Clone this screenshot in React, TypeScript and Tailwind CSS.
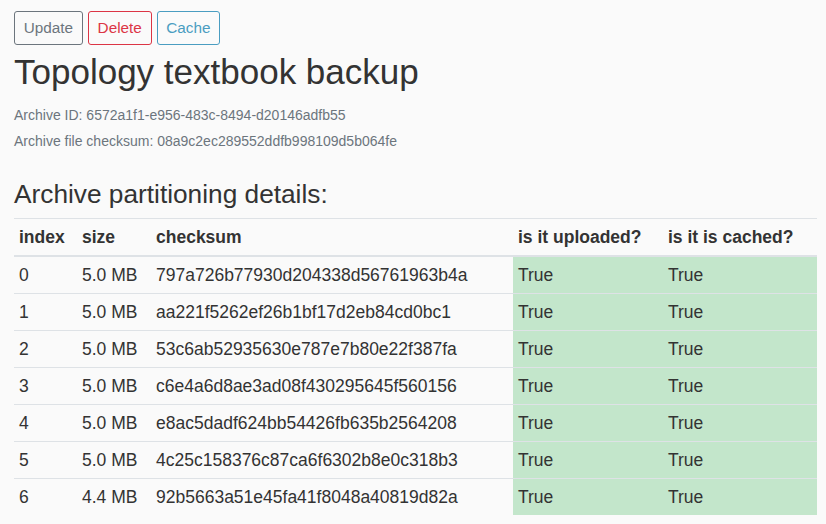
const parts = [
  { index: 0, size: '5.0 MB', checksum: '797a726b77930d204338d56761963b4a' },
  { index: 1, size: '5.0 MB', checksum: 'aa221f5262ef26b1bf17d2eb84cd0bc1' },
  { index: 2, size: '5.0 MB', checksum: '53c6ab52935630e787e7b80e22f387fa' },
  { index: 3, size: '5.0 MB', checksum: 'c6e4a6d8ae3ad08f430295645f560156' },
  { index: 4, size: '5.0 MB', checksum: 'e8ac5dadf624bb54426fb635b2564208' },
  { index: 5, size: '5.0 MB', checksum: '4c25c158376c87ca6f6302b8e0c318b3' },
  { index: 6, size: '4.4 MB', checksum: '92b5663a51e45fa41f8048a40819d82a' },
];

const btn =
  'rounded-[3px] border bg-transparent px-[8.75px] py-[5px] text-[15.3px] leading-[22px]';

export default function App() {
  return (
    <div className="min-h-screen bg-[#fafafa] px-[14px] pt-[11px] text-[17.5px] leading-[1.5] text-[#333] [font-family:'Liberation_Sans',Arial,sans-serif]">
      {/* Actions */}
      <div className="flex gap-[5px]">
        <button className={`${btn} border-[#6c757d] text-[#6c757d]`}>Update</button>
        <button className={`${btn} border-[#dc3545] text-[#dc3545]`}>Delete</button>
        <button className={`${btn} border-[#4a9dc1] text-[#4a9dc1]`}>Cache</button>
      </div>

      <h1 className="mt-[6px] mb-[9px] text-[35px] leading-[1.2]">Topology textbook backup</h1>

      <div className="text-[14px] leading-[26px] text-[#6c757d]">
        <div>Archive ID: 6572a1f1-e956-483c-8494-d20146adfb55</div>
        <div>Archive file checksum: 08a9c2ec289552ddfb998109d5b064fe</div>
      </div>

      <h2 className="mt-[25px] mb-[7px] text-[26.25px] leading-[1.2]">Archive partitioning details:</h2>

      <table className="w-[803px] table-fixed border-collapse leading-[26px]">
        <thead>
          <tr className="border-t border-[#dee2e6] text-left">
            <th className="w-[63px] border-b-2 border-[#dee2e6] p-[5px] font-bold">index</th>
            <th className="w-[74px] border-b-2 border-[#dee2e6] p-[5px] font-bold">size</th>
            <th className="w-[362px] border-b-2 border-[#dee2e6] p-[5px] font-bold">checksum</th>
            <th className="w-[150px] border-b-2 border-[#dee2e6] p-[5px] font-bold">is it uploaded?</th>
            <th className="w-[154px] border-b-2 border-[#dee2e6] p-[5px] font-bold">is it is cached?</th>
          </tr>
        </thead>
        <tbody>
          {parts.map((p) => (
            <tr key={p.index} className="border-t border-[#dee2e6]">
              <td className="p-[5px]">{p.index}</td>
              <td className="p-[5px]">{p.size}</td>
              <td className="p-[5px]">{p.checksum}</td>
              <td className="bg-[#c3e6cb] p-[5px]">True</td>
              <td className="bg-[#c3e6cb] p-[5px]">True</td>
            </tr>
          ))}
        </tbody>
      </table>
    </div>
  );
}
